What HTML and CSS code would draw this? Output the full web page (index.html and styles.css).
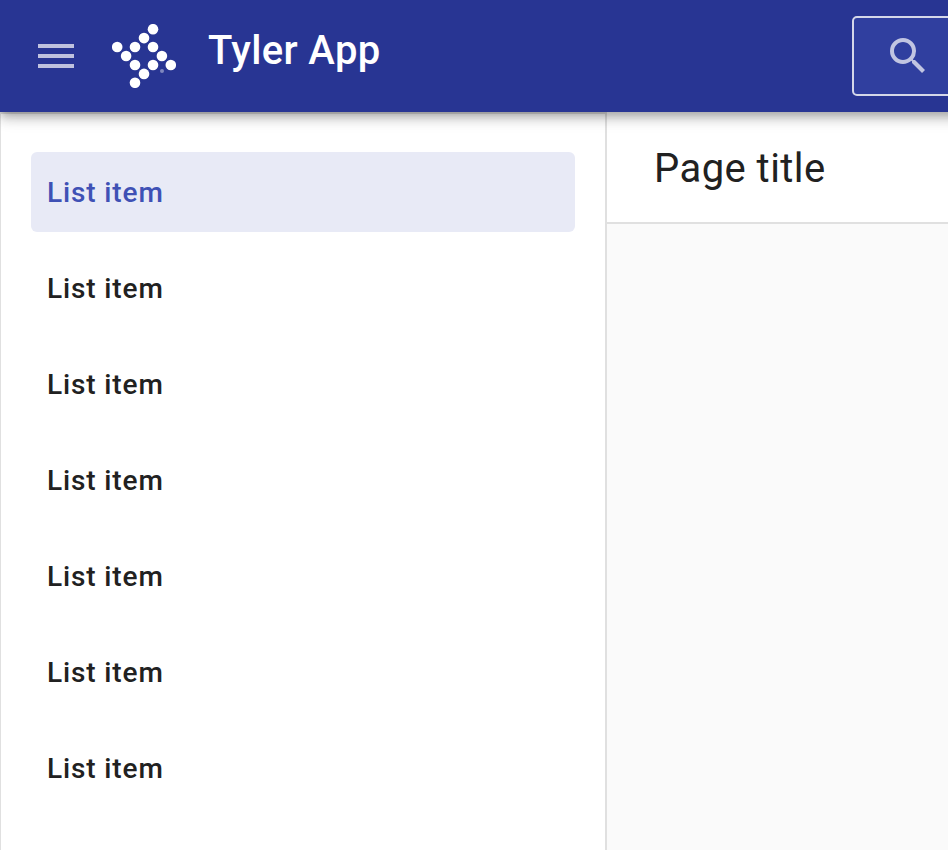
FILE: index.html
```html
<!DOCTYPE html>
<html lang="en">
<head>
<meta charset="utf-8">
<title>Tyler App</title>
<link rel="stylesheet" href="styles.css">
</head>
<body>
<header class="app-bar">
  <svg class="menu" viewBox="0 0 36 24"><path d="M0 0h36v4H0zM0 10h36v4H0zM0 20h36v4H0z"/></svg>
  <svg class="logo" viewBox="0 0 64 64">
    <circle cx="41" cy="5.2" r="5.3"/><circle cx="32" cy="14.1" r="5.3"/><circle cx="5.2" cy="23" r="5.3"/><circle cx="23" cy="23" r="5.3"/><circle cx="41" cy="23" r="5.3"/><circle cx="14.1" cy="32" r="5.3"/><circle cx="49.9" cy="32" r="5.3"/><circle cx="23" cy="41" r="5.3"/><circle cx="41" cy="41" r="5.3"/><circle cx="58.8" cy="41" r="5.3"/><circle cx="32" cy="49.9" r="5.3"/><circle cx="23" cy="58.8" r="5.3"/><circle class="mark" cx="50" cy="47" r="2"/>
  </svg>
  <h1 class="app-title">Tyler App</h1>
  <div class="search"><svg class="search-icon" viewBox="3 3 17.49 17.49"><path d="M15.5 14h-.79l-.28-.27A6.471 6.471 0 0 0 16 9.5 6.5 6.5 0 1 0 9.5 16c1.61 0 3.09-.59 4.23-1.57l.27.28v.79l5 4.99L20.49 19l-4.99-5zm-6 0C7.01 14 5 11.99 5 9.5S7.01 5 9.5 5 14 7.01 14 9.5 11.99 14 9.5 14z"/></svg></div>
</header>
<div class="body">
  <nav class="drawer">
    <a class="item selected">List item</a>
    <a class="item">List item</a>
    <a class="item">List item</a>
    <a class="item">List item</a>
    <a class="item">List item</a>
    <a class="item">List item</a>
    <a class="item">List item</a>
  </nav>
  <main class="content">
    <h2 class="page-title">Page title</h2>
  </main>
</div>
</body>
</html>
```
FILE: styles.css
```css
* { box-sizing: border-box; }
body { margin: 0; height: 850px; overflow: hidden; display: flex; flex-direction: column; font-family: Roboto, sans-serif; color: #212121; background: #fff; }
.app-bar { position: relative; z-index: 1; flex: none; height: 112px; margin-right: -24px; display: flex; align-items: center; padding-left: 38px; background: #283593; box-shadow: 0 4px 8px -2px rgba(0,0,0,.2), 0 8px 10px 0 rgba(0,0,0,.14), 0 2px 20px 0 rgba(0,0,0,.12); }
.menu { width: 36px; height: 24px; fill: #bfc2df; }
.logo { width: 64px; height: 64px; margin-left: 38px; fill: #fff; }
.mark { fill: #7f87be; }
.app-title { margin: 0 0 10px 32px; font-size: 40px; line-height: 48px; font-weight: 500; letter-spacing: .36px; color: #fff; }
.search { flex: none; width: 120px; height: 80px; margin-left: auto; border: 2px solid #d4d7e9; border-radius: 5px; background: #303f9f; padding: 20px 36px; }
.search-icon { display: block; width: 35px; height: 35px; fill: #c1c5e2; }
.body { flex: 1; display: flex; }
.drawer { width: 607px; border: solid #e0e0e0; border-width: 2px 2px 0 1px; padding: 38px 30px 0; display: flex; flex-direction: column; gap: 16px; }
.item { height: 80px; border-radius: 6px; padding: 1px 0 0 16px; font-size: 28px; line-height: 80px; font-weight: 500; letter-spacing: .88px; }
.selected { background: #e8eaf6; color: #3f51b5; }
.content { flex: 1; background: #fafafa; }
.page-title { margin: 0; height: 112px; padding: 1px 0 0 47px; background: #fff; border-bottom: 2px solid #e0e0e0; font-size: 40px; line-height: 112px; font-weight: 400; letter-spacing: .45px; }
```
